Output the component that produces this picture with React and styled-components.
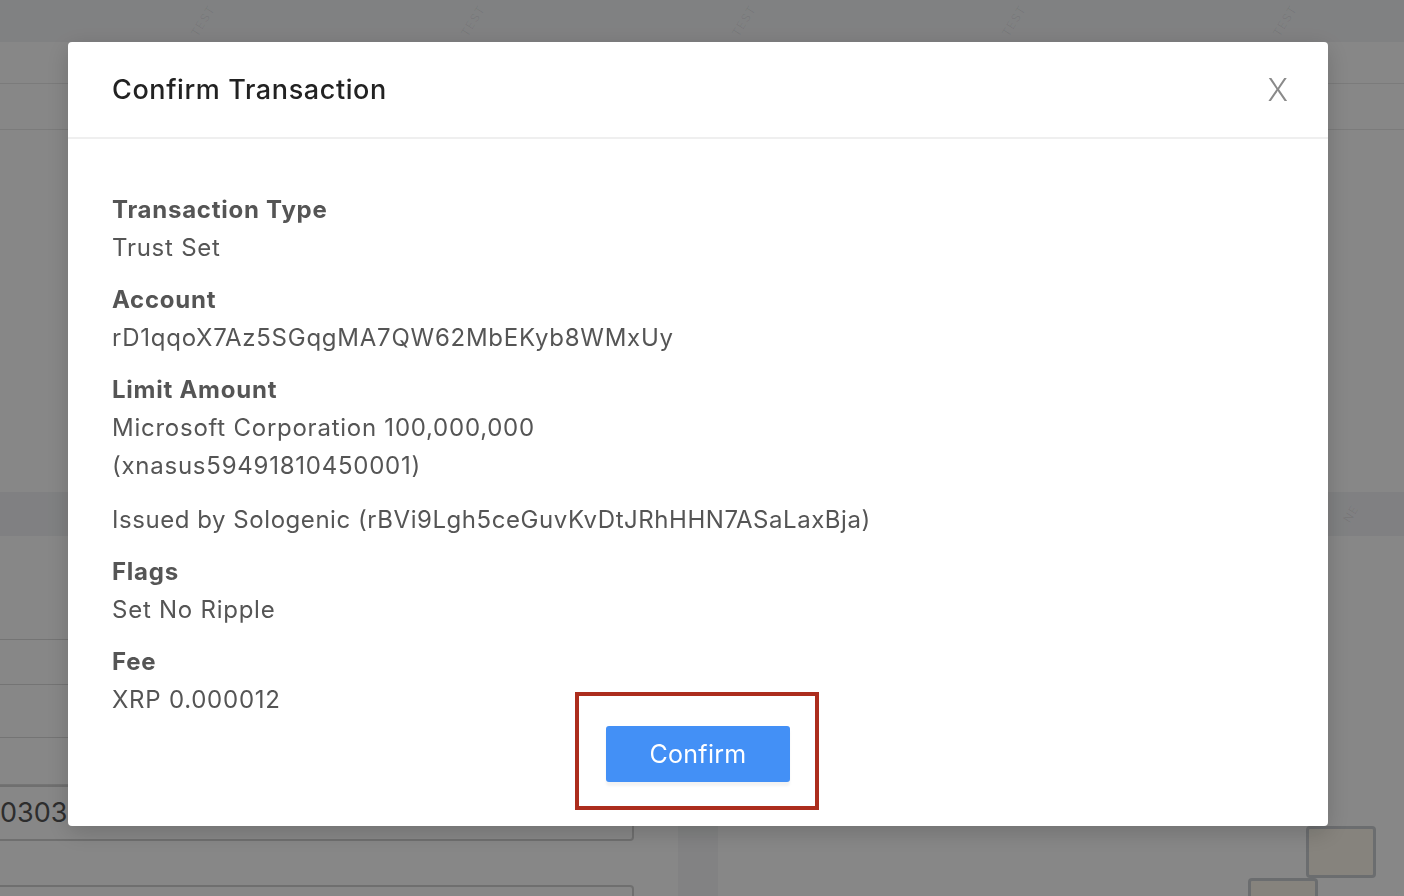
import React from 'react'
import styled, { createGlobalStyle } from 'styled-components'

const GlobalStyle = createGlobalStyle`
  html, body {
    margin: 0;
    padding: 0;
    font-family: Inter, "Open Sans", "Liberation Sans", sans-serif;
    background: #fff;
  }
  * { box-sizing: border-box; }
`;

/* ---- page behind the dialog ---- */
const Page = styled.div`
  width: 1404px;
  height: 896px;
  overflow: hidden;
  background: #fdfdfd;
  display: flex;
  flex-direction: column;
`;
const TopBar = styled.div`
  height: 42px;
  flex-shrink: 0;
  background: #f1f2f4;
  display: flex;
  align-items: center;
  gap: 236px;
  padding-left: 186px;
`;
const Watermark = styled.span`
  display: inline-block;
  white-space: nowrap;
  transform: rotate(-58deg);
  font-size: 12px;
  line-height: 14px;
  letter-spacing: 1px;
  color: rgba(0,0,0,0.07);
`;
const Row = styled.div`
  height: ${({ $h }) => $h}px;
  flex-shrink: 0;
  border-bottom: 1px solid #e6e6e6;
`;
const Spacer = styled.div`
  height: ${({ $h }) => $h}px;
  flex-shrink: 0;
`;
const Band = styled.div`
  height: 44px;
  flex-shrink: 0;
  background: #f0f1f3;
  display: flex;
  align-items: center;
  justify-content: flex-end;
  padding-right: 44px;
`;
const Lower = styled.div`
  flex: 1;
  display: flex;
`;
const FormCol = styled.div`
  width: 678px;
  display: flex;
  flex-direction: column;
`;
const Strip = styled.div`
  width: 40px;
  background: #f3f4f5;
`;
const SideCol = styled.div`
  flex: 1;
  display: flex;
  flex-direction: column;
  align-items: flex-end;
  padding: 290px 28px 0 0;
`;
const Line = styled.div`
  height: ${({ $h }) => $h}px;
  border-bottom: 1px solid #d9d9d9;
`;
const FakeInput = styled.div`
  width: 634px;
  height: ${({ $h }) => $h}px;
  margin-top: ${({ $mt }) => $mt || 0}px;
  border: 2px solid #d0d0d0;
  border-left: none;
  border-radius: 0 4px 4px 0;
  display: flex;
  align-items: flex-end;
  padding-bottom: 10px;
  font-size: 27px;
  color: #555;
`;
const Tile = styled.div`
  width: 70px;
  height: 52px;
  margin-right: ${({ $mr }) => $mr || 0}px;
  border: 3px solid #c9ccd0;
  border-radius: 4px;
  background: #fbf6ea;
`;

/* ---- dialog ---- */
const Overlay = styled.div`
  position: fixed;
  inset: 0;
  background: rgba(0, 0, 0, 0.465);
  padding: 42px 0 0 68px;
`;
const Modal = styled.div`
  width: 1260px;
  height: 784px;
  background: #fff;
  border-radius: 4px;
  box-shadow: 0 6px 24px rgba(0, 0, 0, 0.18);
  display: flex;
  flex-direction: column;
`;
const Header = styled.div`
  height: 97px;
  flex-shrink: 0;
  display: flex;
  align-items: center;
  justify-content: space-between;
  padding: 0 40px 0 44px;
  border-bottom: 2px solid #efefef;
`;
const Title = styled.h2`
  margin: 0;
  font-size: 27px;
  letter-spacing: 0.6px;
  font-weight: 500;
  color: #222;
`;
const Close = styled.button`
  border: none;
  background: none;
  padding: 0;
  font-family: inherit;
  font-size: 31px;
  font-weight: 300;
  color: #8a8a8a;
  cursor: pointer;
`;
const Body = styled.div`
  flex: 1;
  display: flex;
  flex-direction: column;
  padding: 52px 44px 0;
`;
const Field = styled.div`
  display: flex;
  flex-direction: column;
  margin-bottom: 14px;
`;
const Label = styled.div`
  font-size: 24px;
  letter-spacing: 0.75px;
  line-height: 38px;
  font-weight: 700;
  color: #555;
`;
const Value = styled.div`
  font-size: 24px;
  letter-spacing: ${({ $tight }) => ($tight ? '0.55px' : '0.75px')};
  line-height: 38px;
  color: #555;
  margin-top: ${({ $mt }) => $mt || 0}px;
`;
const Actions = styled.div`
  display: flex;
  justify-content: center;
  margin-top: -7px;
`;
const Highlight = styled.div`
  position: relative;
  &::after {
    content: '';
    position: absolute;
    top: -34px;
    left: -31px;
    right: -29px;
    bottom: -28px;
    border: 4px solid #ac2d1d;
    pointer-events: none;
  }
`;
const ConfirmButton = styled.button`
  width: 184px;
  height: 56px;
  border: none;
  border-radius: 3px;
  background: #4390f6;
  color: #fff;
  font-family: inherit;
  font-size: 25px;
  letter-spacing: 0.3px;
  box-shadow: 0 4px 3px rgba(0, 0, 0, 0.05);
  cursor: pointer;
`;

const fields = [
  { label: 'Transaction Type', values: ['Trust Set'] },
  { label: 'Account', values: ['rD1qqoX7Az5SGqgMA7QW62MbEKyb8WMxUy'] },
  {
    label: 'Limit Amount',
    values: ['Microsoft Corporation 100,000,000', '(xnasus59491810450001)'],
    extra: 'Issued by Sologenic (rBVi9Lgh5ceGuvKvDtJRhHHN7ASaLaxBja)',
  },
  { label: 'Flags', values: ['Set No Ripple'] },
  { label: 'Fee', values: ['XRP 0.000012'] },
];

const App = () => {
  return (
    <>
      <GlobalStyle />
      <Page>
        <TopBar>
          {[0, 1, 2, 3, 4].map(i => <Watermark key={i}>TEST</Watermark>)}
        </TopBar>
        <Row $h={42} />
        <Row $h={46} />
        <Spacer $h={362} />
        <Band><Watermark>NE</Watermark></Band>
        <Lower>
          <FormCol>
            <Line $h={104} />
            <Line $h={45} />
            <Line $h={53} />
            <Line $h={47} />
            <FakeInput $h={56}>03030303</FakeInput>
            <FakeInput $h={20} $mt={44} />
          </FormCol>
          <Strip />
          <SideCol>
            <Tile />
            <Tile $mr={58} />
          </SideCol>
        </Lower>
      </Page>
      <Overlay>
        <Modal>
          <Header>
            <Title>Confirm Transaction</Title>
            <Close>X</Close>
          </Header>
          <Body>
            {fields.map(f => (
              <Field key={f.label}>
                <Label>{f.label}</Label>
                {f.values.map(v => <Value key={v}>{v}</Value>)}
                {f.extra && <Value $mt={16} $tight>{f.extra}</Value>}
              </Field>
            ))}
            <Actions>
              <Highlight>
                <ConfirmButton>Confirm</ConfirmButton>
              </Highlight>
            </Actions>
          </Body>
        </Modal>
      </Overlay>
    </>
  )
}

export default App
